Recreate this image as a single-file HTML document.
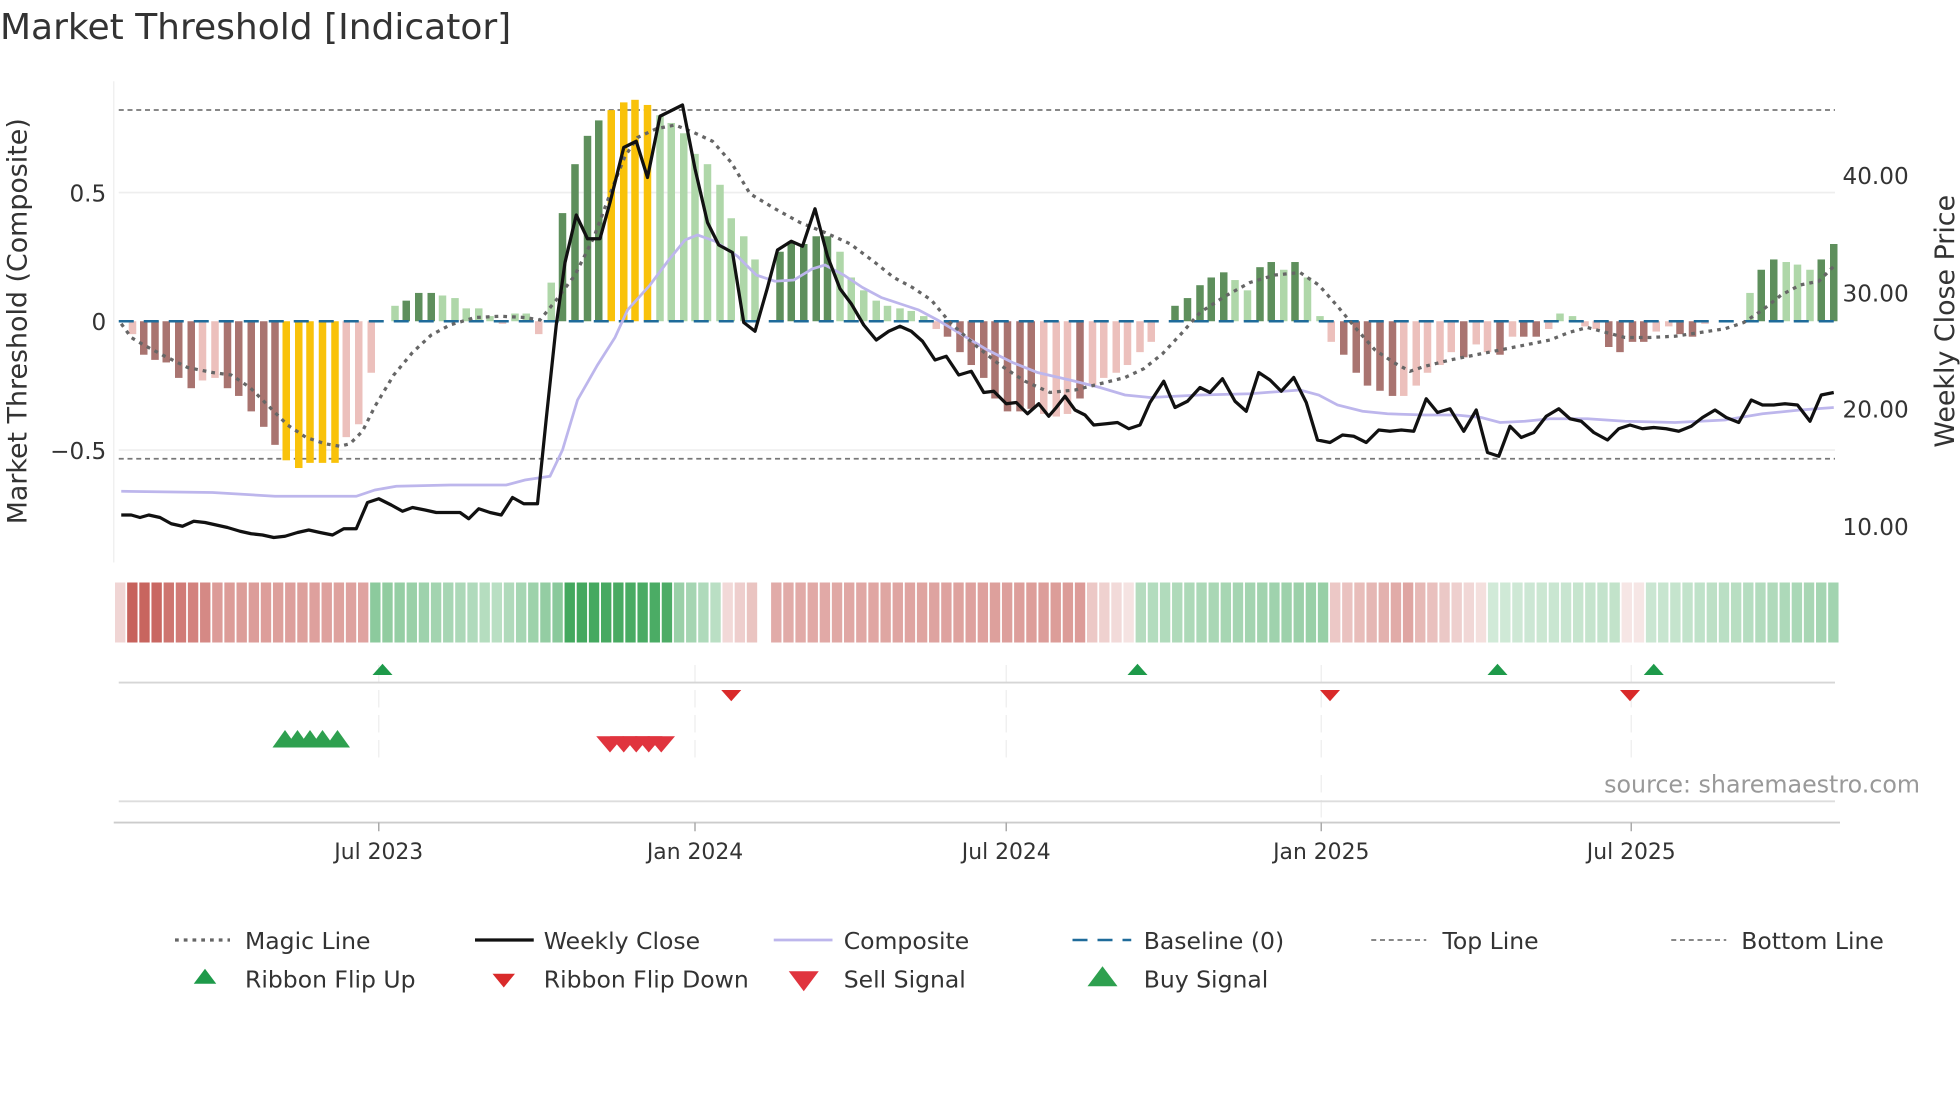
<!DOCTYPE html>
<html><head><meta charset="utf-8"><style>
html,body{margin:0;padding:0;background:#fff;width:1960px;height:1102px;overflow:hidden}
svg{display:block}
text{font-family:"DejaVu Sans","Liberation Sans",sans-serif;fill:#333}
</style></head><body>
<svg id="s" width="1960" height="1102" viewBox="0 0 1568 881.6" xmlns="http://www.w3.org/2000/svg">
<rect width="1568" height="882" fill="#fff"/>
<text x="0" y="31" font-size="28.8">Market Threshold [Indicator]</text>
<line x1="91" y1="65" x2="91" y2="450" stroke="#eee" stroke-width="1"/>
<line x1="95" y1="154" x2="1468" y2="154" stroke="#eee" stroke-width="1.3"/>
<line x1="95" y1="360" x2="1468" y2="360" stroke="#eee" stroke-width="1.3"/>
<line x1="95" y1="88" x2="1468" y2="88" stroke="#777" stroke-width="1.4" stroke-dasharray="4,3"/>
<line x1="95" y1="367" x2="1468" y2="367" stroke="#777" stroke-width="1.4" stroke-dasharray="4,3"/>
<g id="bars"></g>
<line x1="95" y1="257" x2="1468" y2="257" stroke="#1f6b9a" stroke-width="2" stroke-dasharray="12,8"/>
<polyline id="comp" fill="none" stroke="#bdb6ec" stroke-width="2.2"/>
<polyline id="magic" fill="none" stroke="#666" stroke-width="2.6" stroke-dasharray="3,4"/>
<polyline id="close" fill="none" stroke="#111" stroke-width="2.6" stroke-linejoin="round"/>
<g font-size="18.5">
<text x="85" y="161" text-anchor="end">0.5</text>
<text x="85" y="264" text-anchor="end">0</text>
<text x="85" y="367" text-anchor="end">−0.5</text>
<text x="1474" y="147">40.00</text>
<text x="1474" y="241">30.00</text>
<text x="1474" y="334">20.00</text>
<text x="1474" y="428">10.00</text>
</g>
<text font-size="21.5" transform="translate(21,257) rotate(-90)" text-anchor="middle">Market Threshold (Composite)</text>
<text font-size="21.5" transform="translate(1563,257) rotate(-90)" text-anchor="middle">Weekly Close Price</text>
<g id="rib"></g>
<g stroke="#eee" stroke-width="1" stroke-dasharray="14,6">
<line x1="303" y1="532" x2="303" y2="607"/><line x1="556" y1="532" x2="556" y2="607"/><line x1="805" y1="532" x2="805" y2="607"/><line x1="1057" y1="532" x2="1057" y2="607"/><line x1="1305" y1="532" x2="1305" y2="607"/>
<line x1="1057" y1="620" x2="1057" y2="658"/>
</g>
<line x1="95" y1="546" x2="1468" y2="546" stroke="#d6d6d6" stroke-width="1.5"/>
<line x1="95" y1="641" x2="1468" y2="641" stroke="#ddd" stroke-width="1.5"/>
<line x1="91" y1="658" x2="1472" y2="658" stroke="#ccc" stroke-width="1.5"/>
<g stroke="#aaa" stroke-width="1.2"><line x1="303" y1="658" x2="303" y2="665"/><line x1="556" y1="658" x2="556" y2="665"/><line x1="805" y1="658" x2="805" y2="665"/><line x1="1057" y1="658" x2="1057" y2="665"/><line x1="1305" y1="658" x2="1305" y2="665"/></g>
<g fill="#1e9a4a">
<polygon points="298,540 314,540 306,531"/><polygon points="902,540 918,540 910,531"/><polygon points="1190,540 1206,540 1198,531"/><polygon points="1315,540 1331,540 1323,531"/>
</g>
<g fill="#d92a2a">
<polygon points="577,552 593,552 585,561"/><polygon points="1056,552 1072,552 1064,561"/><polygon points="1296,552 1312,552 1304,561"/>
</g>
<g fill="#2ea04f">
<polygon points="218,598 238,598 228,584"/><polygon points="228,598 248,598 238,584"/><polygon points="238,598 258,598 248,584"/><polygon points="248,598 268,598 258,584"/><polygon points="260,598 280,598 270,584"/>
</g>
<g fill="#e0343e">
<polygon points="477,589 499,589 488,602"/><polygon points="488,589 510,589 499,602"/><polygon points="498,589 520,589 509,602"/><polygon points="508,589 530,589 519,602"/><polygon points="518,589 540,589 529,602"/>
</g>
<text x="1536" y="634" font-size="19" text-anchor="end" style="fill:#999">source: sharemaestro.com</text>
<g font-size="17.5" text-anchor="middle">
<text x="303" y="687">Jul 2023</text><text x="556" y="687">Jan 2024</text><text x="805" y="687">Jul 2024</text><text x="1057" y="687">Jan 2025</text><text x="1305" y="687">Jul 2025</text>
</g>
<g font-size="18.8">
<line x1="140" y1="752" x2="184" y2="752" stroke="#666" stroke-width="2.6" stroke-dasharray="3,4"/><text x="196" y="759">Magic Line</text>
<line x1="380" y1="752" x2="427" y2="752" stroke="#111" stroke-width="2.6"/><text x="435" y="759">Weekly Close</text>
<line x1="619" y1="752" x2="666" y2="752" stroke="#bdb6ec" stroke-width="2.2"/><text x="675" y="759">Composite</text>
<line x1="858" y1="752" x2="905" y2="752" stroke="#1f6b9a" stroke-width="2" stroke-dasharray="12,8"/><text x="915" y="759">Baseline (0)</text>
<line x1="1097" y1="752" x2="1141" y2="752" stroke="#777" stroke-width="1.4" stroke-dasharray="4,3"/><text x="1154" y="759">Top Line</text>
<line x1="1337" y1="752" x2="1381" y2="752" stroke="#777" stroke-width="1.4" stroke-dasharray="4,3"/><text x="1393" y="759">Bottom Line</text>
<polygon points="155,787 173,787 164,775" fill="#1e9a4a"/><text x="196" y="790">Ribbon Flip Up</text>
<polygon points="394,779 412,779 403,790" fill="#d92a2a"/><text x="435" y="790">Ribbon Flip Down</text>
<polygon points="631,777 655,777 643,793" fill="#e0343e"/><text x="675" y="790">Sell Signal</text>
<polygon points="870,789 894,789 882,773" fill="#2ea04f"/><text x="915" y="790">Buy Signal</text>
</g>
</svg>
<script>
var NS="http://www.w3.org/2000/svg";
function el(p,t,a){var e=document.createElementNS(NS,t);for(var k in a)e.setAttribute(k,a[k]);p.appendChild(e);return e;}
var col={d:"#a97470",l:"#ecc0bc",y:"#f9c20a",g:"#5e8f5c",h:"#afd7a9"};
var B=[[106,-.05,'l'],[115,-.13,'d'],[124,-.15,'d'],[133,-.16,'d'],[143,-.22,'d'],[153,-.26,'d'],[162,-.23,'l'],[172,-.22,'l'],[182,-.26,'d'],[191,-.29,'d'],[201,-.35,'d'],[211,-.41,'d'],[220,-.48,'d'],[229,-.54,'y'],[239,-.57,'y'],[248,-.55,'y'],[258,-.55,'y'],[268,-.55,'y'],[277,-.45,'l'],[287,-.4,'l'],[297,-.2,'l'],[316,.06,'h'],[325,.08,'g'],[335,.11,'g'],[345,.11,'g'],[354,.1,'h'],[364,.09,'h'],[373,.05,'h'],[383,.05,'h'],[392,.02,'h'],[402,-.01,'l'],[412,.03,'h'],[421,.03,'h'],[431,-.05,'l'],[441,.15,'h'],[450,.42,'g'],[460,.61,'g'],[470,.72,'g'],[479,.78,'g'],[489,.82,'y'],[499,.85,'y'],[508,.86,'y'],[518,.84,'y'],[528,.80,'h'],[537,.77,'h'],[547,.73,'h'],[556,.65,'h'],[566,.61,'h'],[576,.53,'h'],[585,.40,'h'],[595,.33,'h'],[604,.24,'h'],[624,.27,'g'],[633,.31,'g'],[643,.30,'g'],[653,.33,'g'],[662,.33,'g'],[672,.27,'h'],[681,.17,'h'],[691,.12,'h'],[701,.08,'h'],[710,.06,'h'],[720,.05,'h'],[729,.04,'h'],[739,.02,'h'],[749,-.03,'l'],[758,-.06,'d'],[768,-.12,'d'],[777,-.17,'d'],[787,-.22,'d'],[796,-.30,'d'],[806,-.35,'d'],[816,-.35,'d'],[825,-.34,'d'],[835,-.36,'l'],[845,-.37,'l'],[854,-.36,'l'],[864,-.30,'d'],[874,-.25,'l'],[883,-.22,'l'],[893,-.2,'l'],[902,-.17,'l'],[912,-.12,'l'],[921,-.08,'l'],[940,.06,'g'],[950,.09,'g'],[960,.14,'g'],[969,.17,'g'],[979,.19,'g'],[988,.16,'h'],[998,.12,'h'],[1008,.21,'g'],[1017,.23,'g'],[1027,.20,'h'],[1036,.23,'g'],[1046,.17,'h'],[1056,.02,'h'],[1065,-.08,'l'],[1075,-.13,'d'],[1085,-.20,'d'],[1094,-.25,'d'],[1104,-.27,'d'],[1114,-.29,'d'],[1123,-.29,'l'],[1133,-.25,'l'],[1142,-.20,'l'],[1152,-.17,'l'],[1161,-.12,'l'],[1171,-.14,'d'],[1181,-.09,'l'],[1190,-.12,'l'],[1200,-.13,'d'],[1210,-.06,'l'],[1219,-.06,'d'],[1229,-.06,'d'],[1239,-.03,'l'],[1248,.03,'h'],[1258,.02,'h'],[1268,-.02,'l'],[1277,-.03,'l'],[1287,-.10,'d'],[1296,-.12,'d'],[1306,-.08,'d'],[1315,-.08,'d'],[1325,-.04,'l'],[1335,-.02,'l'],[1344,-.05,'d'],[1354,-.06,'d'],[1364,-.01,'l'],[1400,.11,'h'],[1409,.20,'g'],[1419,.24,'g'],[1429,.23,'h'],[1438,.22,'h'],[1448,.20,'h'],[1457,.24,'g'],[1467,.30,'g']];
var g=document.getElementById('bars');
B.forEach(function(b){var y=257-206*b[1];el(g,'rect',{x:b[0]-3,y:Math.min(y,257),width:6,height:Math.abs(257-y),fill:col[b[2]]});});
function P(id,a){var s=[];for(var i=0;i<a.length;i+=2)s.push(a[i]+','+a[i+1]);document.getElementById(id).setAttribute('points',s.join(' '));}
P('close',[97,412,105,412,112,414,119,412,128,414,137,419,146,421,155,417,164,418,173,420,182,422,192,425,201,427,210,428,219,430,228,429,238,426,247,424,256,426,266,428,275,423,285,423,294,402,303,399,313,404,322,409,330,406,340,408,349,410,359,410,368,410,375,415,383,407,392,410,401,412,410,398,419,403,430,403,437,335,445,260,452,210,461,172,470,191,480,191,488,162,499,118,509,113,518,142,528,93,538,88,546,84,556,135,566,178,575,196,586,202,595,258,604,265,614,230,622,200,633,193,642,197,652,167,662,205,672,231,681,243,691,260,701,272,711,265,720,261,729,265,738,273,748,288,757,285,767,300,777,297,787,314,795,313,805,323,813,322,822,331,831,323,839,333,845,326,852,317,860,328,868,332,875,340,885,339,894,338,903,343,912,340,920,322,931,305,940,326,950,321,960,310,968,314,978,303,988,321,997,329,1007,298,1016,304,1025,313,1035,302,1045,322,1054,352,1064,354,1074,348,1083,349,1093,354,1103,344,1112,345,1121,344,1131,345,1141,319,1150,330,1160,327,1171,345,1181,328,1190,362,1199,365,1208,341,1217,350,1227,346,1237,333,1247,327,1256,335,1265,337,1275,346,1286,352,1295,343,1304,340,1314,343,1323,342,1333,343,1343,345,1353,341,1362,334,1372,328,1381,334,1391,338,1401,320,1410,324,1419,324,1428,323,1438,324,1448,337,1457,316,1467,314]);
P('comp',[97,393,170,394,220,397,285,397,300,392,317,389,360,388,405,388,420,384,440,381,450,360,462,320,478,292,492,270,502,248,520,228,535,208,548,192,558,188,572,193,590,205,605,220,620,225,635,224,650,215,660,212,675,220,690,230,705,238,720,243,735,248,750,256,765,265,790,280,810,290,830,298,860,305,880,310,900,316,920,318,960,316,1000,315,1040,312,1055,316,1070,324,1090,329,1110,331,1140,332,1165,332,1185,334,1200,338,1220,337,1240,335,1270,335,1300,337,1340,338,1380,336,1410,331,1440,328,1467,326]);
P('magic',[97,259,105,270,115,276,130,284,150,294,170,298,185,300,200,310,215,325,230,340,245,350,260,355,272,357,280,355,290,345,300,325,315,300,330,282,345,268,360,260,380,254,400,253,420,254,432,256,445,240,460,220,475,190,490,150,500,125,510,110,525,103,540,100,555,106,570,113,585,130,600,155,620,167,640,178,660,186,680,195,700,210,715,222,730,230,745,240,760,258,780,276,800,292,820,305,840,314,860,312,880,307,900,302,915,295,930,283,945,267,960,250,980,237,1000,226,1020,220,1040,218,1055,228,1070,245,1085,263,1100,280,1115,290,1128,297,1140,293,1160,288,1180,284,1200,280,1220,276,1240,272,1255,266,1270,262,1285,266,1300,270,1320,270,1340,269,1360,266,1380,263,1395,258,1410,248,1425,236,1440,228,1455,225,1467,213]);
var S=[[92,100,'r',.25,.25],[101,130,'r',.95,.9],[130,165,'r',.85,.7],[165,292,'r',.6,.55],[292,300,'r',.2,.2],[300,390,'g',.55,.35],[390,455,'g',.3,.6],[455,540,'g',.9,.85],[540,578,'g',.5,.3],[578,608,'r',.2,.4],[619,870,'r',.5,.6],[870,906,'r',.35,.15],[906,1060,'g',.35,.5],[1060,1130,'r',.3,.55],[1130,1194,'r',.45,.15],[1194,1300,'g',.22,.3],[1300,1318,'r',.15,.15],[1318,1472,'g',.25,.45]];
var R=document.getElementById('rib');
function mix(c,t){return 'rgb('+c.map(function(v){return Math.round(255+(v-255)*t)}).join(',')+')';}
for(var i=0;;i++){var x=92+9.72*i;if(x>1466)break;var cx=x+4;
 for(var j=0;j<S.length;j++){var s=S[j];if(cx>=s[0]&&cx<s[1]){var f=(cx-s[0])/(s[1]-s[0]);var t=s[3]+(s[4]-s[3])*f;
  var base=s[2]=='r'?[196,88,82]:[46,158,76];el(R,'rect',{x:x,y:466,width:8.3,height:48,fill:mix(base,t)});break;}}}
</script>
</body></html>
